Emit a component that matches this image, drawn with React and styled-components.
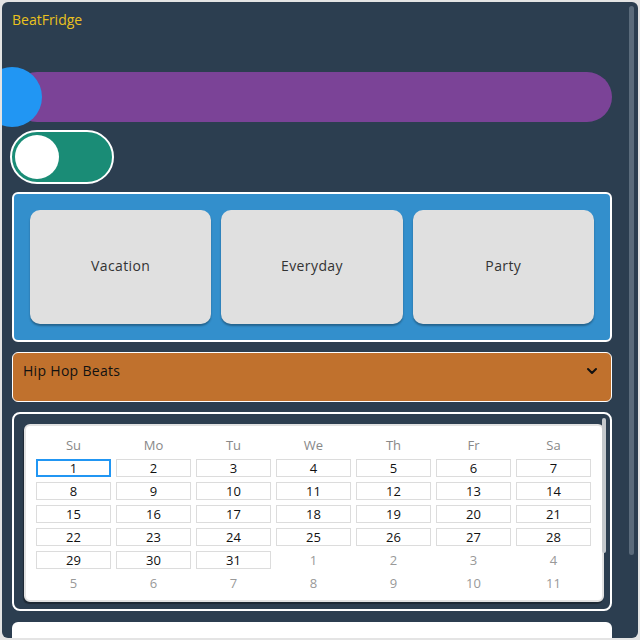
import React, { useState } from 'react';
import styled, { createGlobalStyle } from 'styled-components';
import { ChevronDown } from 'lucide-react';

const GlobalStyle = createGlobalStyle`
  html, body {
    margin: 0;
    padding: 0;
    background: #e4e4e4;
  }
  * {
    box-sizing: border-box;
  }
`;

const moods = ['Vacation', 'Everyday', 'Party'];
const weekDays = ['Su', 'Mo', 'Tu', 'We', 'Th', 'Fr', 'Sa'];

// 6 weeks, month starts on Sunday the 1st, 31 days
const buildDays = () => {
  const days = [];
  for (let i = 0; i < 42; i++) {
    const inMonth = i < 31;
    days.push({ label: inMonth ? i + 1 : i - 30, inMonth });
  }
  return days;
};

const App = () => {
  const [mood, setMood] = useState(null);
  const [on, setOn] = useState(false);
  const [selected, setSelected] = useState(1);
  const days = buildDays();

  return (
    <>
      <GlobalStyle />
      <Frame>
        <Scroller>
          <Title>BeatFridge</Title>

          <Slider>
            <Track />
            <Knob />
          </Slider>

          <Toggle $on={on} onClick={() => setOn(!on)}>
            <ToggleDot />
          </Toggle>

          <MoodPanel>
            {moods.map((m) => (
              <MoodCard key={m} $active={mood === m} onClick={() => setMood(m)}>
                {m}
              </MoodCard>
            ))}
          </MoodPanel>

          <Dropdown>
            <span>Hip Hop Beats</span>
            <ChevronDown size={16} strokeWidth={3} color="#111" />
          </Dropdown>

          <CalendarPanel>
            <CalendarScroller>
              <CalendarBox>
                <DayGrid>
                  {weekDays.map((d) => (
                    <WeekDay key={d}>{d}</WeekDay>
                  ))}
                  {days.map((d, i) => (
                    <Day
                      key={i}
                      $inMonth={d.inMonth}
                      $selected={d.inMonth && d.label === selected}
                      onClick={() => d.inMonth && setSelected(d.label)}
                    >
                      {d.label}
                    </Day>
                  ))}
                </DayGrid>
              </CalendarBox>
              <TimeBox />
            </CalendarScroller>
            <ScrollThumb $top={4} $right={4} $width={4} $height={135} $color="#c4c8cc" />
          </CalendarPanel>

          <NotePanel>
            <NoteText>Describe the beat you want to cook up tonight...</NoteText>
          </NotePanel>
        </Scroller>
        <ScrollThumb $top={4} $right={4} $width={5} $height={549} $color="#5b6b7b" />
      </Frame>
    </>
  );
};

export default App;

const Frame = styled.div`
  position: relative;
  margin: 2px;
  width: 636px;
  height: 636px;
  border-radius: 6px;
  background: #2c3e50;
  overflow: hidden;
  font-family: 'Open Sans', 'Liberation Sans', sans-serif;
`;

const Scroller = styled.div`
  height: 100%;
  padding: 10px 26px 10px 10px;
  overflow-y: auto;
  scrollbar-width: none;
  display: flex;
  flex-direction: column;
`;

const ScrollThumb = styled.div`
  position: absolute;
  top: ${(p) => p.$top}px;
  right: ${(p) => p.$right}px;
  width: ${(p) => p.$width}px;
  height: ${(p) => p.$height}px;
  border-radius: 3px;
  background: ${(p) => p.$color};
`;

const Title = styled.div`
  color: #ebc21e;
  font-size: 14px;
  line-height: 16px;
  height: 16px;
  flex-shrink: 0;
`;

const Slider = styled.div`
  position: relative;
  margin-top: 39px;
  height: 60px;
  flex-shrink: 0;
  padding-top: 5px;
`;

const Track = styled.div`
  height: 50px;
  border-radius: 25px;
  background: #7b4397;
`;

const Knob = styled.div`
  position: absolute;
  left: -30px;
  top: 0;
  width: 60px;
  height: 60px;
  border-radius: 50%;
  background: #2196f3;
`;

const Toggle = styled.div`
  margin: 3px 0 0 -2px;
  width: 104px;
  height: 54px;
  flex-shrink: 0;
  border: 2px solid #ffffff;
  border-radius: 27px;
  background: #1a8c76;
  padding: 3px;
  display: flex;
  justify-content: ${(p) => (p.$on ? 'flex-end' : 'flex-start')};
  cursor: pointer;
`;

const ToggleDot = styled.div`
  width: 44px;
  height: 44px;
  border-radius: 50%;
  background: #ffffff;
`;

const MoodPanel = styled.div`
  margin-top: 8px;
  height: 150px;
  flex-shrink: 0;
  border: 2px solid #ffffff;
  border-radius: 6px;
  background: #338fcc;
  padding: 16px;
  display: grid;
  grid-template-columns: repeat(3, 1fr);
  gap: 10px;
`;

const MoodCard = styled.button`
  border: none;
  border-radius: 10px;
  background: ${(p) => (p.$active ? '#f0f0f0' : '#e0e0e0')};
  box-shadow: 0 2px 2px rgba(0, 0, 0, 0.3);
  color: #333;
  font-family: inherit;
  font-size: 14px;
  line-height: 16px;
  padding: 0 0 2px;
  letter-spacing: 0.4px;
  cursor: pointer;
`;

const Dropdown = styled.div`
  margin-top: 10px;
  height: 50px;
  flex-shrink: 0;
  border: 1px solid #ffffff;
  border-radius: 6px;
  background: #c0712d;
  padding: 8px 11px 0 10px;
  display: flex;
  justify-content: space-between;
  align-items: flex-start;
  color: #111;
  font-size: 14px;
  line-height: 19px;
  letter-spacing: 0.3px;

  svg {
    margin-top: 2px;
  }
`;

const CalendarPanel = styled.div`
  position: relative;
  margin-top: 10px;
  height: 199px;
  flex-shrink: 0;
  border: 2px solid #ffffff;
  border-radius: 8px;
  background: #2c3e50;
  overflow: hidden;
`;

const CalendarScroller = styled.div`
  height: 100%;
  padding: 10px 6px 10px 10px;
  overflow-y: auto;
  scrollbar-width: none;
`;

const CalendarBox = styled.div`
  border: 2px solid #e2e2e2;
  border-radius: 6px;
  background: #ffffff;
  box-shadow: -1px 2px 1px rgba(0, 0, 0, 0.35);
  padding: 10px 8px 8px 10px;
`;

const DayGrid = styled.div`
  display: grid;
  grid-template-columns: repeat(7, 75px);
  grid-template-rows: 18px;
  grid-auto-rows: 18px;
  column-gap: 5px;
  row-gap: 5px;
`;

const WeekDay = styled.div`
  text-align: center;
  color: #888;
  font-size: 13px;
  line-height: 18px;
`;

const Day = styled.div`
  display: flex;
  align-items: center;
  justify-content: center;
  font-size: 13px;
  color: ${(p) => (p.$inMonth ? '#111' : '#999')};
  border: ${(p) =>
    p.$selected ? '2px solid #2196f3' : p.$inMonth ? '1px solid #dcdcdc' : 'none'};
  cursor: ${(p) => (p.$inMonth ? 'pointer' : 'default')};
`;

const TimeBox = styled.div`
  margin-top: 10px;
  height: 70px;
  border-radius: 6px;
  background: #ffffff;
`;

const NotePanel = styled.div`
  margin-top: 11px;
  height: 100px;
  flex-shrink: 0;
  border-radius: 6px;
  background: #ffffff;
  padding: 13px 12px;
`;

const NoteText = styled.div`
  color: #c4c4c4;
  font-size: 14px;
`;
